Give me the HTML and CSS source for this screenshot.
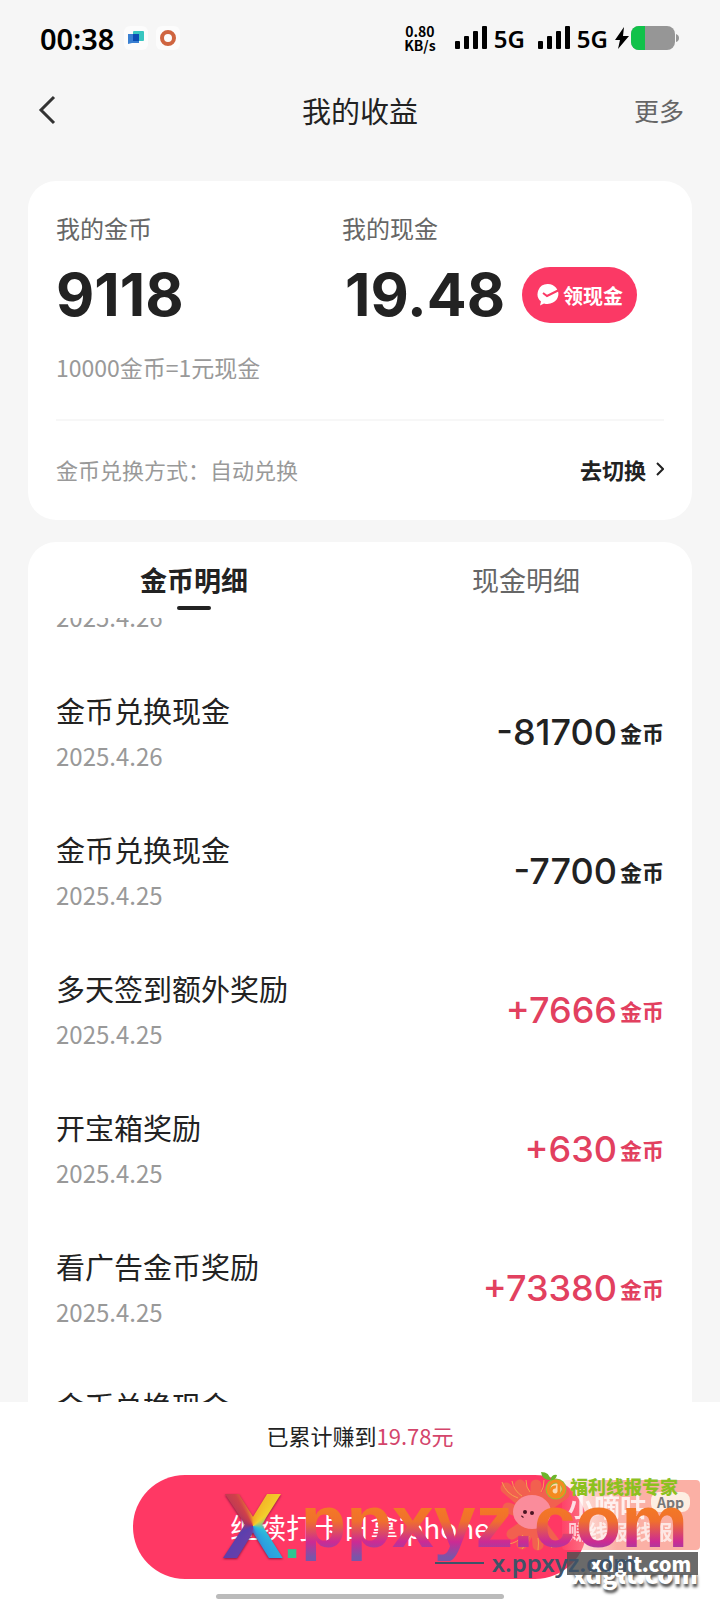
FILE: index.html
```html
<!DOCTYPE html>
<html lang="zh-CN">
  <head>
    <meta charset="UTF-8" />
    <meta name="viewport" content="width=device-width, initial-scale=1.0" />
    <title>我的收益</title>
    <link rel="stylesheet" href="styles.css" />
  </head>
  <body>
    <div class="status">
      <span class="time">00:38</span>
      <svg class="app-icon" viewBox="0 0 24 24">
        <rect width="24" height="24" rx="6" fill="#fcfcfc" />
        <rect x="9" y="5" width="11" height="10" rx="1" fill="#38c6c0" />
        <path d="M4 8h11v9H8l-4 1z" fill="#3a80d2" />
        <rect x="9" y="8" width="6" height="7" fill="#0b4db4" />
      </svg>
      <svg class="app-icon" viewBox="0 0 24 24">
        <rect width="24" height="24" rx="6" fill="#fcfcfc" />
        <circle cx="12" cy="12" r="6" fill="none" stroke="#cf6540" stroke-width="4" />
      </svg>
      <span class="speed">0.80<br />KB/s</span>
      <svg class="signal" viewBox="0 0 34 24">
        <g fill="#000">
          <rect x="1" y="15" width="5" height="8" rx="1" />
          <rect x="10" y="10" width="5" height="13" rx="1" />
          <rect x="19" y="5" width="5" height="18" rx="1" />
          <rect x="28" y="0" width="5" height="23" rx="1" />
        </g>
      </svg>
      <span class="net">5G</span>
      <svg class="signal second" viewBox="0 0 34 24">
        <g fill="#000">
          <rect x="1" y="15" width="5" height="8" rx="1" />
          <rect x="10" y="10" width="5" height="13" rx="1" />
          <rect x="19" y="5" width="5" height="18" rx="1" />
          <rect x="28" y="0" width="5" height="23" rx="1" />
        </g>
      </svg>
      <span class="net">5G</span>
      <svg class="battery" viewBox="0 0 66 24">
        <path d="M10 1 1 14h5l-2 9L15 10H9z" fill="#000" />
        <rect x="17" y="0" width="44" height="24" rx="8" fill="#969696" />
        <path d="M25 0h6v24h-6a8 8 0 0 1-8-8V8a8 8 0 0 1 8-8z" fill="#11c24a" />
        <path d="M62 8q3 1 3 4t-3 4z" fill="#969696" />
      </svg>
    </div>

    <header>
      <button class="back" aria-label="返回">
        <svg viewBox="0 0 18 30"><path d="M16 2 3 15l13 13" fill="none" stroke="#333" stroke-width="3" /></svg>
      </button>
      <h1>我的收益</h1>
      <a class="more" href="#">更多</a>
    </header>

    <section class="card balance">
      <div class="columns">
        <div>
          <p class="label">我的金币</p>
          <p class="value">9118</p>
        </div>
        <div>
          <p class="label">我的现金</p>
          <div class="cash">
            <p class="value">19.48</p>
            <button class="withdraw">
              <svg viewBox="0 0 24 24">
                <path d="M12 1a11 10 0 1 1-4 19.500L4 22.500l1-4A10 10 0 0 1 12 1z" fill="#fff" />
                <path d="m7 10 4 3 12-6" fill="none" stroke="#fb3965" stroke-width="2" />
              </svg>
              领现金
            </button>
          </div>
        </div>
      </div>
      <p class="rate">10000金币=1元现金</p>
      <div class="exchange">
        <span>金币兑换方式：自动兑换</span>
        <a class="switch" href="#">
          去切换
          <svg viewBox="0 0 8 14"><path d="m1 1 6 6-6 6" fill="none" stroke="#222" stroke-width="2" /></svg>
        </a>
      </div>
    </section>

    <section class="card details">
      <nav class="tabs">
        <button class="tab active">金币明细</button>
        <button class="tab">现金明细</button>
      </nav>
      <div class="list">
        <ul>
          <li>
            <div><p class="name">金币兑换现金</p><p class="date">2025.4.26</p></div>
          </li>
          <li>
            <div><p class="name">金币兑换现金</p><p class="date">2025.4.26</p></div>
            <p class="amount">-81700<small>金币</small></p>
          </li>
          <li>
            <div><p class="name">金币兑换现金</p><p class="date">2025.4.25</p></div>
            <p class="amount">-7700<small>金币</small></p>
          </li>
          <li>
            <div><p class="name">多天签到额外奖励</p><p class="date">2025.4.25</p></div>
            <p class="amount plus">+7666<small>金币</small></p>
          </li>
          <li>
            <div><p class="name">开宝箱奖励</p><p class="date">2025.4.25</p></div>
            <p class="amount plus">+630<small>金币</small></p>
          </li>
          <li>
            <div><p class="name">看广告金币奖励</p><p class="date">2025.4.25</p></div>
            <p class="amount plus">+73380<small>金币</small></p>
          </li>
          <li>
            <div><p class="name">金币兑换现金</p><p class="date">2025.4.25</p></div>
          </li>
        </ul>
      </div>
    </section>

    <footer>
      <p class="total">已累计赚到<span>19.78元</span></p>
      <button class="checkin">继续打卡日拿iphone</button>
      <div class="home-bar"></div>

      <div class="promo">
        <span class="promo-title">小嘀咕</span>
        <span class="promo-app">App</span>
        <span class="promo-text">赚线报&nbsp;线报</span>
      </div>
      <svg class="mascot" viewBox="0 0 76 74">
        <g fill="none" stroke="#f2604f" stroke-width="11" stroke-linecap="round">
          <path d="M38 36 8 10M38 36 22 7M38 36 38 7M38 36 54 8M38 36 66 16M38 40 10 30M38 40 14 56M38 40 24 66M38 40 40 67M38 40 56 64" />
        </g>
        <g fill="none" stroke="#f4a04e" stroke-width="1">
          <path d="M4 4q4 12 16 16M14 3q2 10 10 15M28 2q0 8 4 12M46 2q0 8-3 12M62 6q-3 9-10 12M10 66q10-1 15-9M24 71q6-6 7-13M40 72q1-8 0-12M54 70q-6-6-6-12" />
        </g>
        <ellipse cx="34" cy="34" rx="19" ry="17" fill="#fa8c9b" />
        <circle cx="27" cy="34" r="2" fill="#4a1522" />
        <circle cx="34" cy="35" r="2" fill="#4a1522" />
        <path d="M23 38q3 0 2 2" fill="none" stroke="#4a1522" />
      </svg>
      <div class="expert">
        <svg viewBox="0 0 28 30">
          <circle cx="16" cy="18" r="8" fill="#fbd9b0" stroke="#9aba35" stroke-width="5" />
          <circle cx="16" cy="18" r="8" fill="none" stroke="#f58a1f" stroke-width="3" />
          <path d="M19 11v8a4 4 0 1 1-3-3" fill="none" stroke="#f58a1f" stroke-width="3" />
          <path d="M1 1q9 0 9 8Q2 9 1 1zM10 9q2-6 7-5-1 6-7 5z" fill="#6db52c" />
        </svg>
        福利线报专家
      </div>
      <div class="brand"><span class="brand-x">X</span><span class="brand-dot">.</span><span class="brand-name">ppxyz.com</span></div>
      <div class="site-shadow">xdglt.com</div>
      <div class="site">xdglt.com</div>
      <div class="address">x.ppxyz.com</div>
    </footer>
  </body>
</html>
```

FILE: styles.css
```css
* {
  margin: 0;
  padding: 0;
  box-sizing: border-box;
}

body {
  height: 100vh;
  display: flex;
  flex-direction: column;
  overflow: hidden;
  font-family: "Noto Sans CJK SC", "Noto Sans", sans-serif;
  color: #222;
  background-color: #f6f6f6;
}

button {
  border: none;
  background: none;
  font-family: inherit;
  cursor: pointer;
}

a {
  color: inherit;
  text-decoration: none;
}

ul {
  list-style: none;
}

/* STATUS BAR */
.status {
  display: flex;
  align-items: center;
  height: 76px;
  padding: 0 40px;
  color: #000;
}

.time {
  font-family: "Noto Sans", sans-serif;
  font-size: 29px;
  font-weight: 600;
  margin-right: 10px;
}

.app-icon {
  width: 24px;
  height: 24px;
  margin-right: 8px;
}

.speed {
  margin-left: auto;
  margin-right: 18px;
  font-size: 14px;
  font-weight: 700;
  line-height: 14px;
  text-align: center;
}

.signal {
  width: 34px;
  height: 24px;
}

.signal.second {
  margin-left: 12px;
}

.net {
  margin-left: 6px;
  font-family: "Noto Sans", sans-serif;
  font-size: 24px;
  font-weight: 600;
}

.battery {
  width: 66px;
  height: 24px;
  margin-left: 6px;
}

/* HEADER */
header {
  display: grid;
  grid-template-columns: 1fr auto 1fr;
  align-items: center;
  height: 68px;
  margin-bottom: 37px;
  padding: 0 36px;
}

h1 {
  font-size: 29px;
  font-weight: 400;
  line-height: 40px;
}

.back {
  justify-self: start;
  padding-left: 2px;
}

.back svg {
  display: block;
  width: 18px;
  height: 30px;
}

.more {
  justify-self: end;
  font-size: 25px;
  line-height: 36px;
  color: #666;
}

/* BALANCE */
.card {
  margin: 0 28px;
  background-color: #fff;
  border-radius: 28px;
}

.balance {
  padding: 28px 28px 0;
  margin-bottom: 22px;
}

.columns {
  display: grid;
  grid-template-columns: 286px 1fr;
}

.label {
  font-size: 24px;
  line-height: 38px;
  color: #666;
}

.value {
  font-family: "Inter", sans-serif;
  font-size: 59px;
  font-weight: 700;
  line-height: 96px;
}

.cash {
  display: flex;
  align-items: center;
  gap: 17px;
  padding-left: 3px;
}

.withdraw {
  display: flex;
  align-items: center;
  gap: 3px;
  height: 56px;
  padding: 0 14px;
  border-radius: 28px;
  background-color: #fb3965;
  color: #fff;
  font-size: 20px;
  font-weight: 700;
}

.withdraw svg {
  width: 24px;
  height: 24px;
}

.rate {
  padding: 6px 0 34px;
  font-size: 23px;
  line-height: 36px;
  color: #999;
  border-bottom: 2px solid #f7f7f7;
}

.exchange {
  display: flex;
  align-items: center;
  justify-content: space-between;
  padding: 30px 0 33px;
  font-size: 22px;
  line-height: 36px;
  color: #999;
}

.switch {
  display: flex;
  align-items: center;
  gap: 10px;
  color: #222;
  font-weight: 700;
}

.switch svg {
  width: 8px;
  height: 14px;
}

/* DETAILS */
.details {
  flex: 1;
  min-height: 0;
  display: flex;
  flex-direction: column;
  border-radius: 28px 28px 0 0;
}

.tabs {
  display: grid;
  grid-template-columns: 1fr 1fr;
  height: 76px;
}

.tab {
  display: flex;
  flex-direction: column;
  align-items: center;
  padding-top: 16px;
  font-size: 27px;
  line-height: 44px;
  color: #666;
}

.tab.active {
  color: #222;
  font-weight: 700;
}

.tab.active::after {
  content: "";
  width: 34px;
  height: 4px;
  margin-top: 4px;
  border-radius: 2px;
  background-color: #222;
}

.list {
  flex: 1;
  min-height: 0;
  overflow: hidden;
  padding: 0 28px;
}

/* list is scrolled part of the way through a row */
.list ul {
  margin-top: -93px;
}

.list li {
  display: flex;
  align-items: center;
  justify-content: space-between;
  height: 139px;
}

.name {
  font-size: 29px;
  line-height: 45px;
}

.date {
  font-size: 24px;
  line-height: 46px;
  color: #999;
}

.amount {
  display: flex;
  align-items: center;
  padding-bottom: 4px;
  font-family: "Inter", "Noto Sans CJK SC", sans-serif;
  font-size: 36px;
  font-weight: 500;
}

.amount small {
  margin-left: 3px;
  font-family: "Noto Sans CJK SC", sans-serif;
  font-size: 22px;
  font-weight: 700;
}

.amount.plus {
  color: #e2405f;
}

/* FOOTER */
footer {
  position: relative;
  display: flex;
  flex-direction: column;
  align-items: center;
  height: 198px;
  background-color: #fff;
}

.total {
  padding: 15px 0 22px;
  font-size: 22px;
  line-height: 36px;
}

.total span {
  color: #d4456b;
}

.checkin {
  width: 63%;
  height: 104px;
  border-radius: 52px;
  background-color: #ff3864;
  color: #fff;
  font-size: 28px;
}

.home-bar {
  width: 40%;
  height: 5px;
  margin-top: 15px;
  border-radius: 3px;
  background-color: #bbb;
}

/* overlays on top of the button */
.promo {
  position: absolute;
  right: 20px;
  top: 78px;
  width: 138px;
  height: 70px;
  border-radius: 4px;
  background: linear-gradient(90deg, rgba(249, 160, 148, 0.1), #fbb0a5 40%);
  color: #fff;
  font-weight: 700;
}

.promo-title {
  position: absolute;
  left: 6px;
  top: 10px;
  font-size: 26px;
  line-height: 32px;
  opacity: 0.8;
}

.promo-app {
  position: absolute;
  right: 10px;
  top: 12px;
  padding: 0 6px;
  border-radius: 8px;
  background-color: #fdeee2;
  color: #777;
  font-size: 14px;
  line-height: 20px;
}

.promo-text {
  position: absolute;
  left: 6px;
  top: 40px;
  font-size: 20px;
  line-height: 24px;
  white-space: nowrap;
  opacity: 0.7;
}

.mascot {
  position: absolute;
  right: 146px;
  top: 76px;
  width: 76px;
  height: 74px;
}

.expert {
  position: absolute;
  right: 42px;
  top: 69px;
  display: flex;
  align-items: center;
  color: #8cc11f;
  font-size: 18px;
  font-weight: 900;
  white-space: nowrap;
}

.expert svg {
  width: 28px;
  height: 30px;
  margin-right: 2px;
}

.brand {
  position: absolute;
  right: 32px;
  top: 79px;
  display: flex;
  align-items: baseline;
  font-family: "Liberation Sans", sans-serif;
  font-size: 75px;
  font-weight: 700;
  line-height: 90px;
}

.brand span {
  color: transparent;
  -webkit-background-clip: text;
  background-clip: text;
}

.brand-x {
  font-size: 92px;
  background-image: conic-gradient(#f5a623, #f2d02c 50deg, #2cc0d8 110deg, #2b9fe0 150deg, #6a3fa8 190deg, #5a3fae 240deg, #a83260 290deg, #d0404a 330deg, #f5a623);
  filter: drop-shadow(0 1px 1px rgba(60, 0, 40, 0.6));
}

.brand .brand-dot {
  color: #2fc391;
  font-size: 60px;
}

.brand-name {
  align-self: flex-start;
  line-height: 80px;
  background-image: linear-gradient(#f47a24 30%, #f0702c 50%, #cc2a94 76%, #7a55a8 95%);
}

.site-shadow {
  position: absolute;
  right: 22px;
  bottom: 12px;
  font-size: 25px;
  font-weight: 900;
  line-height: 30px;
  color: #fff;
  text-shadow: 1px 3px 3px #444;
}

.site {
  position: absolute;
  right: 22px;
  bottom: 25px;
  width: 131px;
  padding-left: 16px;
  background-color: rgba(80, 80, 80, 0.85);
  color: #fff;
  font-size: 20px;
  font-weight: 900;
  line-height: 23px;
  text-align: center;
}

.address {
  position: absolute;
  right: 84px;
  bottom: 21px;
  display: flex;
  align-items: center;
  gap: 8px;
  color: #3f5368;
  font-family: "Noto Sans", sans-serif;
  font-size: 24px;
  font-weight: 600;
  line-height: 32px;
}

.address::before {
  content: "";
  width: 49px;
  height: 2px;
  background-color: #3f5368;
}
```
